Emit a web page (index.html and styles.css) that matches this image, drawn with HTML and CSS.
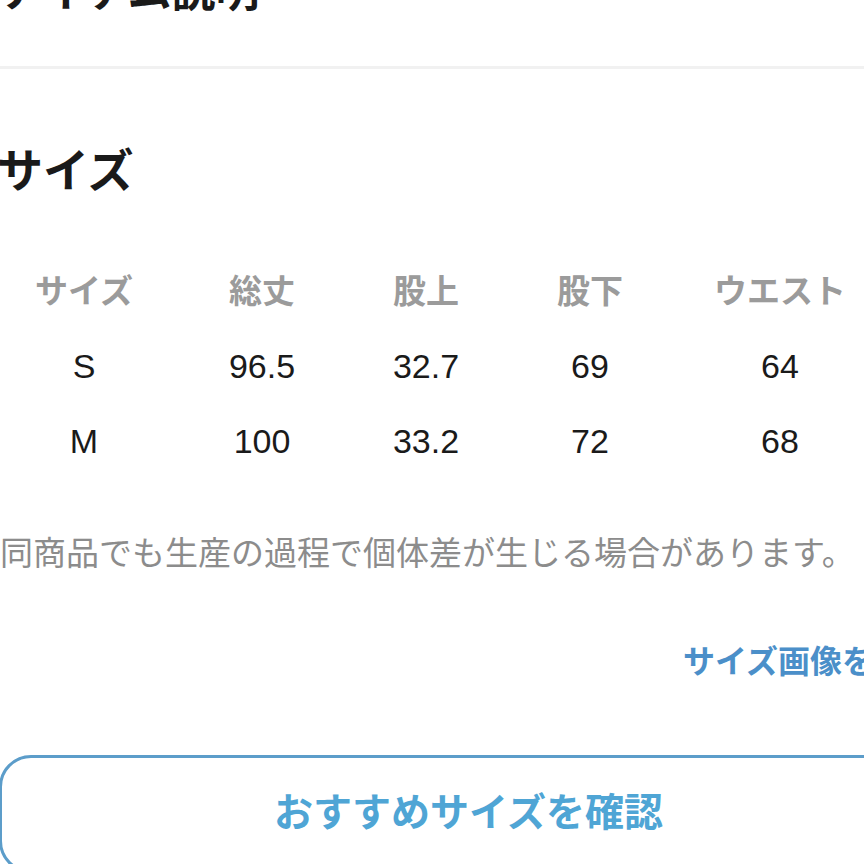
FILE: index.html
```html
<!DOCTYPE html>
<html lang="ja">
<head>
<meta charset="utf-8">
<link rel="stylesheet" href="styles.css">
</head>
<body>
<div class="page">
  <h1 class="item-title">アイテム説明</h1>
  <div class="divider"></div>
  <h2 class="size-title">サイズ</h2>
  <div class="size-table">
    <div class="th">サイズ</div>
    <div class="th">総丈</div>
    <div class="th">股上</div>
    <div class="th">股下</div>
    <div class="th">ウエスト</div>
    <div class="td">S</div>
    <div class="td">96.5</div>
    <div class="td">32.7</div>
    <div class="td">69</div>
    <div class="td">64</div>
    <div class="td">M</div>
    <div class="td">100</div>
    <div class="td">33.2</div>
    <div class="td">72</div>
    <div class="td">68</div>
  </div>
  <p class="note">同商品でも生産の過程で個体差が生じる場合があります。</p>
  <div class="link-row"><a class="size-link">サイズ画像を見る</a></div>
  <div class="recommend-btn">おすすめサイズを確認</div>
</div>
</body>
</html>
```
FILE: styles.css
```css
html, body {
  margin: 0;
  padding: 0;
  background: #ffffff;
  overflow: hidden;
  width: 864px;
  height: 864px;
}
.page {
  width: 938px;
  font-family: "Noto Sans CJK JP", "Liberation Sans", sans-serif;
  color: #1a1a1a;
}
.item-title {
  margin: -34px 0 0 0;
  font-size: 44px;
  line-height: 44px;
  font-weight: 700;
  white-space: nowrap;
}
.divider {
  margin-top: 56px;
  height: 3px;
  background: #f1f1f1;
}
.size-title {
  margin: 75px 0 0 -3px;
  font-size: 46px;
  line-height: 46px;
  font-weight: 700;
}
.size-table {
  margin-top: 62px;
  display: grid;
  grid-template-columns: 168px 188px 140px 188px 192px;
  grid-auto-rows: 75px;
  align-items: center;
  justify-items: center;
}
.th {
  font-size: 33px;
  line-height: 75px;
  font-weight: 700;
  color: #9b9b9b;
}
.td {
  font-family: "Liberation Sans", Arial, sans-serif;
  font-size: 34px;
  line-height: 75px;
  color: #1a1a1a;
  transform: translateY(2px);
}
.note {
  margin: 50px 0 0 0;
  font-size: 33px;
  line-height: 48px;
  color: #8c8c8c;
  white-space: nowrap;
}
.link-row {
  margin-top: 60px;
  display: flex;
  justify-content: flex-end;
}
.size-link {
  font-size: 32px;
  line-height: 48px;
  font-weight: 700;
  color: #4b8fc9;
  white-space: nowrap;
}
.recommend-btn {
  margin: 72px 0 0 -1px;
  height: 102px;
  padding-bottom: 10px;
  border: 3px solid #5c9dca;
  border-radius: 32px;
  display: flex;
  align-items: center;
  justify-content: center;
  font-size: 39px;
  font-weight: 700;
  color: #4fa5d5;
  white-space: nowrap;
}
```
